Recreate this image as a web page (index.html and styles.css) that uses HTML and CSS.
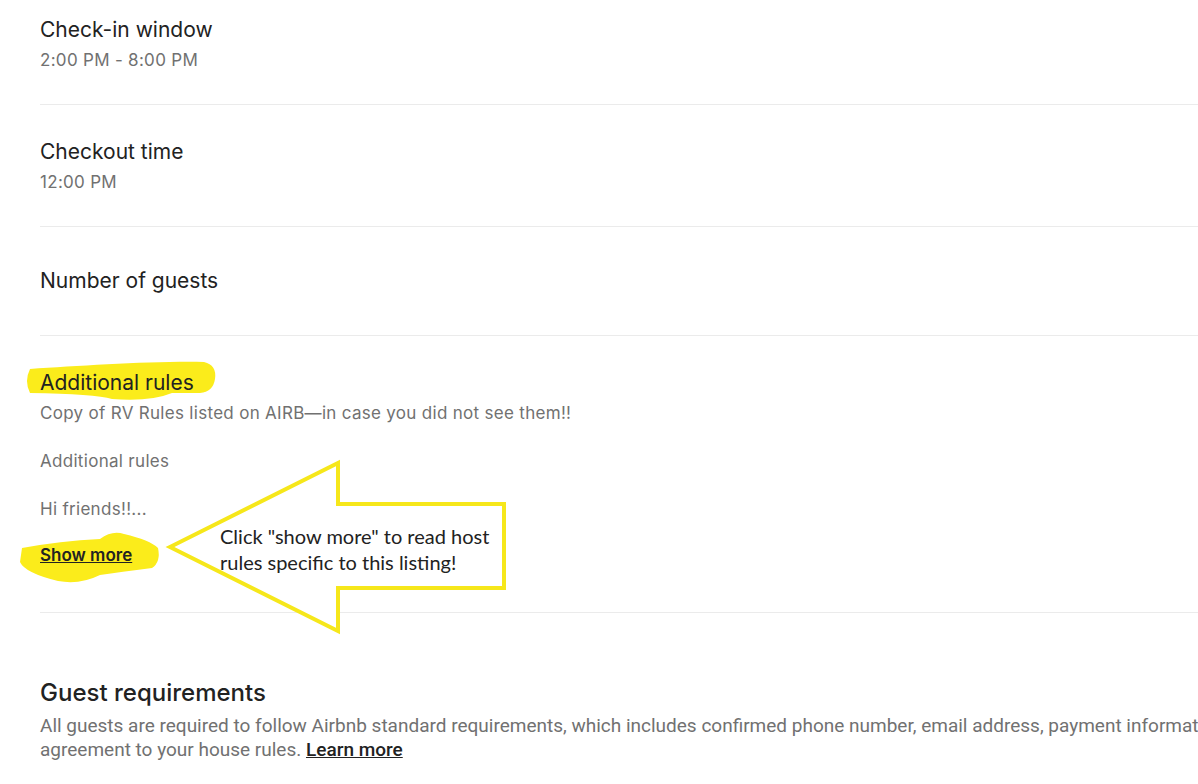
FILE: index.html
```html
<!DOCTYPE html>
<html lang="en">
<head>
  <meta charset="UTF-8" />
  <title>House rules</title>
  <link rel="stylesheet" href="styles.css">
</head>
<body>
  <div id="page">
    <!-- highlighter marks, behind the text -->
    <svg class="marks" width="1198" height="784" viewBox="0 0 1198 784">
      <path d="M30,369 C80,366 150,361 204,362 Q217,365 215,379 Q213,392 200,393 L172,393 Q150,402 112,399 Q95,394 30,393 Q24,381 30,369 Z" fill="#fbec1b"/>
      <path d="M22,548 Q60,541 100,539 Q112,530 124,534 Q150,540 158,548 Q161,562 152,568 Q120,572 100,575 Q80,585 58,581 Q25,573 20,562 Z" fill="#fbec1b"/>
    </svg>

    <div class="row first">
      <div class="title">Check-in window</div>
      <div class="sub">2:00 PM - 8:00 PM</div>
    </div>

    <div class="row">
      <div class="title">Checkout time</div>
      <div class="sub">12:00 PM</div>
    </div>

    <div class="row single">
      <div class="title">Number of guests</div>
    </div>

    <div class="row">
      <div class="title">Additional rules</div>
      <div class="sub">Copy of RV Rules listed on AIRB—in case you did not see them!!</div>
      <div class="sub gap">Additional rules</div>
      <div class="sub gap">Hi friends!!...</div>
      <a class="show-more" href="#">Show more</a>
    </div>

    <div class="requirements">
      <h2>Guest requirements</h2>
      <p>All guests are required to follow Airbnb standard requirements, which includes confirmed phone number, email address, payment information, and agreement to your house rules. <a href="#">Learn more</a></p>
    </div>

    <!-- annotation arrow -->
    <svg class="arrow" width="1198" height="784" viewBox="0 0 1198 784">
      <path d="M170,547 L338,463 L338,504 L504,504 L504,588 L338,588 L338,631 Z" fill="#fff" stroke="#f6e71a" stroke-width="4" stroke-linejoin="miter"/>
    </svg>
    <div class="callout">Click "show more" to read host<br>rules specific to this listing!</div>
  </div>
</body>
</html>
```

FILE: styles.css
```css
body {
  margin: 0;
  background: #fff;
  color: #222;
  font-family: Inter, "Noto Sans", sans-serif;
  overflow: hidden;
}

#page {
  position: relative;
  width: 1290px;
  padding-left: 40px;
  height: 784px;
}

.marks,
.arrow {
  position: absolute;
  top: 0;
  left: 0;
  pointer-events: none;
}

.marks { z-index: 0; }
.arrow { z-index: 2; }

.row {
  position: relative;
  z-index: 1;
  padding: 34px 0 33px;
  border-bottom: 1px solid #ebebeb;
}

.row.first {
  padding-top: 17px;
}

.row.single {
  padding: 41px 0 41px;
}

.title {
  font-size: 21px;
  line-height: 26px;
  color: #222;
}

.sub {
  margin-top: 6px;
  font-size: 17px;
  line-height: 22px;
  letter-spacing: 0.3px;
  color: #717171;
}

.sub.gap {
  margin-top: 26px;
}

.show-more {
  display: inline-block;
  margin-top: 24px;
  margin-bottom: 13px;
  font-size: 17px;
  line-height: 22px;
  font-weight: 600;
  color: #222;
  text-decoration: underline;
}

.requirements {
  position: relative;
  z-index: 1;
  padding-top: 66px;
}

.requirements h2 {
  margin: 0;
  font-size: 24px;
  line-height: 28px;
  font-weight: 500;
  color: #222;
}

.requirements p {
  margin: 7px 0 0;
  font-family: Roboto, "Liberation Sans", sans-serif;
  font-size: 19px;
  line-height: 24px;
  color: #717171;
}

.requirements p a {
  color: #222;
  font-weight: 500;
  text-decoration: underline;
}

.callout {
  position: absolute;
  z-index: 3;
  left: 220px;
  top: 523px;
  font-family: Lato, "Open Sans", sans-serif;
  font-size: 20px;
  line-height: 26px;
  color: #222;
}
```
